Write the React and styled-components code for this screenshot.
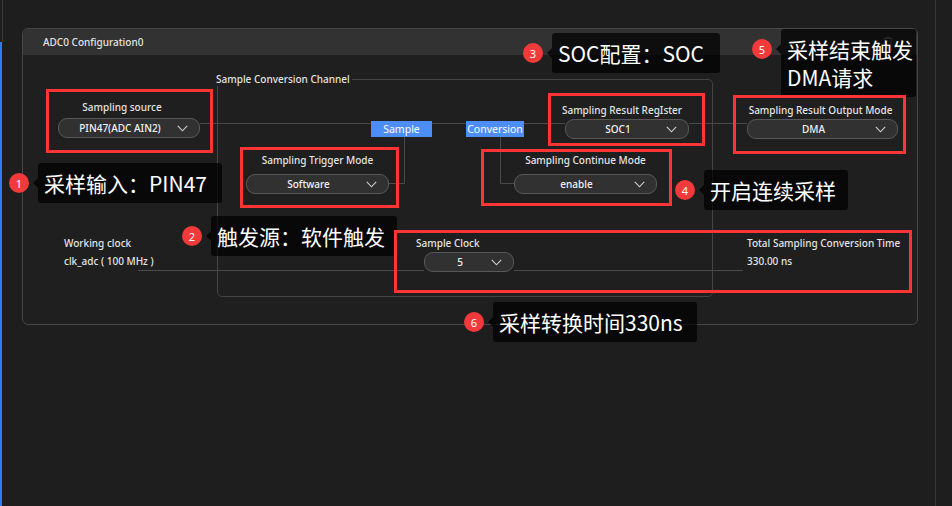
import React from "react";
import styled, { createGlobalStyle } from "styled-components";

const OX = 23;
const OY = 55;
const UI = `"Noto Sans", "Open Sans", "Liberation Sans", sans-serif`;
const CJK = `"Noto Sans CJK SC", "Noto Sans", sans-serif`;
const FS = "10px";

const GlobalStyle = createGlobalStyle`
  html, body { margin: 0; padding: 0; background: #1e1e1e; }
  body { font-family: ${UI}; color: #e8e8e8; }
  #root { width: 952px; height: 506px; }
`;

const Screen = styled.div`
  position: relative;
  width: 952px;
  height: 506px;
  display: flex;
  background: #1e1e1e;
  overflow: hidden;
`;
const LeftRail = styled.div`
  width: 3px;
  display: flex;
  flex-direction: column;
`;
const RailTop = styled.div`
  height: 42px;
  border-right: 1px solid #3a3a3a;
`;
const RailBlue = styled.div`
  flex: 1;
  width: 2px;
  background: #2f7bf0;
`;
const Main = styled.div`
  flex: 1;
  padding: 28px 0 0 19px;
`;
const Divider = styled.div`
  width: 1px;
  background: #393939;
`;
const Gutter = styled.div`
  width: 16px;
`;

const Panel = styled.section`
  width: 896px;
  height: 297px;
  box-sizing: border-box;
  border: 1px solid #474747;
  border-radius: 6px;
  background: #1f1f1f;
  display: flex;
  flex-direction: column;
`;
const PanelHeader = styled.header`
  height: 26px;
  flex: none;
  background: #323232;
  border-radius: 5px 5px 0 0;
  padding: 0 24px 0 20px;
  display: flex;
  align-items: center;
  justify-content: space-between;
`;
const PanelTitle = styled.span`
  font-size: ${FS};
  font-weight: 500;
  color: #e2e2e2;
`;
const PanelBody = styled.div`
  position: relative;
  flex: 1;
`;

const Group = styled.div`
  position: absolute;
  left: ${217 - OX}px;
  top: ${79 - OY}px;
  width: 496px;
  height: 218px;
  box-sizing: border-box;
  border: 1px solid #444;
  border-radius: 5px;
`;
const Legend = styled.span`
  position: absolute;
  left: -2px;
  top: -8px;
  padding-right: 2px;
  background: #1f1f1f;
  font-size: ${FS};
  font-weight: 500;
  line-height: 14px;
  color: #e2e2e2;
  white-space: nowrap;
`;

const Wires = styled.svg`
  position: absolute;
  left: 0;
  top: 0;
  width: 100%;
  height: 100%;
  overflow: visible;
  pointer-events: none;
`;

const Field = styled.div`
  position: absolute;
  left: ${(p) => p.$x - OX}px;
  top: ${(p) => p.$y - OY}px;
  width: ${(p) => p.$w}px;
  display: flex;
  flex-direction: column;
  align-items: ${(p) => (p.$start ? "flex-start" : "center")};
  gap: ${(p) => p.$gap}px;
`;
const FieldLabel = styled.span`
  font-size: ${FS};
  font-weight: 500;
  line-height: 14px;
  color: #e4e4e4;
  white-space: nowrap;
  transform: translateX(${(p) => p.$shift || 0}px);
`;
const Select = styled.div`
  position: relative;
  align-self: stretch;
  height: 20px;
  box-sizing: border-box;
  border: 1px solid #585858;
  border-radius: 9px;
  background: #313131;
  padding-right: 18px;
  display: flex;
  align-items: center;
  justify-content: center;
  font-size: ${FS};
  font-weight: 500;
  color: #f2f2f2;
  white-space: nowrap;
`;
const Chevron = styled.svg`
  position: absolute;
  right: 11px;
  top: 6px;
`;

const Tag = styled.div`
  position: absolute;
  left: ${(p) => p.$x - OX}px;
  top: ${121 - OY}px;
  width: ${(p) => p.$w}px;
  height: 16px;
  background: #4d8df6;
  color: #fff;
  font-size: 10.5px;
  display: flex;
  align-items: center;
  justify-content: center;
`;

const Info = styled.div`
  position: absolute;
  left: ${(p) => p.$x - OX}px;
  top: ${234 - OY}px;
  display: flex;
  flex-direction: column;
  font-size: ${FS};
  font-weight: 500;
  line-height: 18px;
  color: #e4e4e4;
  white-space: nowrap;
`;

/* annotation overlay */
const RedBox = styled.div`
  position: absolute;
  left: ${(p) => p.$x}px;
  top: ${(p) => p.$y}px;
  width: ${(p) => p.$w}px;
  height: ${(p) => p.$h}px;
  box-sizing: border-box;
  border: 3px solid #ff3434;
  z-index: 3;
`;
const Callout = styled.div`
  position: absolute;
  left: ${(p) => p.$x}px;
  top: ${(p) => p.$y}px;
  display: flex;
  align-items: flex-start;
  z-index: 2;
`;
const Badge = styled.span`
  width: 20px;
  height: 20px;
  margin-top: 10px;
  border-radius: 50%;
  background: #f23a3a;
  color: #fff;
  font-family: ${UI};
  font-size: 11px;
  display: flex;
  align-items: center;
  justify-content: center;
  flex: none;
`;
const Arrow = styled.span`
  margin: 15px 0 0 4px;
  width: 0;
  height: 0;
  border-top: 5px solid transparent;
  border-bottom: 5px solid transparent;
  border-right: 5px solid rgba(0, 0, 0, 0.72);
  flex: none;
`;
const Tip = styled.div`
  width: ${(p) => p.$w}px;
  box-sizing: border-box;
  padding: 6px 6px;
  background: rgba(0, 0, 0, 0.72);
  border-radius: 3px;
  font-family: ${CJK};
  font-size: 21px;
  line-height: 28px;
  color: #fff;
  white-space: nowrap;
`;

const TrashIcon = () => (
  <svg width="10" height="12" viewBox="0 0 10 12" fill="none" stroke="#8a8a8a" strokeWidth="1">
    <path d="M0.5 2.5h9M3.5 2.5V1h3v1.5M1.5 2.5l0.7 9h5.6l0.7-9" />
  </svg>
);

const Down = () => (
  <Chevron width="11" height="7" viewBox="0 0 11 7" fill="none">
    <path d="M0.8 0.8 L5.5 5.8 L10.2 0.8" stroke="#d2d2d2" strokeWidth="1.1" />
  </Chevron>
);

const fields = [
  { label: "Sampling source", value: "PIN47(ADC AIN2)", x: 58, y: 100, w: 142, gap: 4, shift: -7 },
  { label: "Sampling Trigger Mode", value: "Software", x: 246, y: 153, w: 143, gap: 7 },
  { label: "Sampling Result RegIster", value: "SOC1", x: 565, y: 103, w: 124, gap: 2, shift: -5 },
  { label: "Sampling Result Output Mode", value: "DMA", x: 747, y: 103, w: 151, gap: 2, shift: -2 },
  { label: "Sampling Continue Mode", value: "enable", x: 514, y: 153, w: 143, gap: 7 },
  { label: "Sample Clock", value: "5", x: 424, y: 236, w: 90, gap: 2, start: true, shift: -8 },
];

const wires = [
  "M200 123.5 H371",
  "M432 123.5 H466",
  "M524 123.5 H565",
  "M689 123.5 H747",
  "M404.5 137 V183.5 H389",
  "M500.5 137 V183.5 H514",
  "M138 270.5 H424",
  "M514 270.5 H743",
];

const boxes = [
  { x: 46, y: 89, w: 167, h: 64 },
  { x: 240, y: 147, w: 159, h: 61 },
  { x: 548, y: 93, w: 157, h: 53 },
  { x: 481, y: 149, w: 191, h: 57 },
  { x: 733, y: 95, w: 173, h: 59 },
  { x: 394, y: 230, w: 518, h: 63 },
];

const notes = [
  { n: 1, x: 9, y: 163, w: 184, lines: ["采样输入：PIN47"] },
  { n: 2, x: 182, y: 216, w: 186, lines: ["触发源：软件触发"] },
  { n: 3, x: 523, y: 33, w: 168, lines: ["SOC配置：SOC"] },
  { n: 4, x: 675, y: 170, w: 144, lines: ["开启连续采样"] },
  { n: 5, x: 752, y: 29, w: 135, lines: ["采样结束触发", "DMA请求"] },
  { n: 6, x: 464, y: 302, w: 204, lines: ["采样转换时间330ns"] },
];

export default function App() {
  return (
    <>
      <GlobalStyle />
      <Screen>
        <LeftRail>
          <RailTop />
          <RailBlue />
        </LeftRail>
        <Main>
          <Panel>
            <PanelHeader>
              <PanelTitle>ADC0 Configuration0</PanelTitle>
              <TrashIcon />
            </PanelHeader>
            <PanelBody>
              <Group>
                <Legend>Sample Conversion Channel</Legend>
              </Group>
              <Wires>
                <g transform={`translate(${-OX} ${-OY})`} stroke="#4a4a4a" strokeWidth="1" fill="none">
                  {wires.map((d) => (
                    <path key={d} d={d} />
                  ))}
                </g>
              </Wires>
              <Tag $x={371} $w={61}>Sample</Tag>
              <Tag $x={466} $w={58}>Conversion</Tag>
              {fields.map((f) => (
                <Field key={f.label} $x={f.x} $y={f.y} $w={f.w} $gap={f.gap} $start={f.start}>
                  <FieldLabel $shift={f.shift}>{f.label}</FieldLabel>
                  <Select>
                    {f.value}
                    <Down />
                  </Select>
                </Field>
              ))}
              <Info $x={64}>
                <span>Working clock</span>
                <span>clk_adc ( 100 MHz )</span>
              </Info>
              <Info $x={747}>
                <span>Total Sampling Conversion Time</span>
                <span>330.00 ns</span>
              </Info>
            </PanelBody>
          </Panel>
        </Main>
        <Divider />
        <Gutter />
        {notes.map((c) => (
          <Callout key={c.n} $x={c.x} $y={c.y}>
            <Badge>{c.n}</Badge>
            <Arrow />
            <Tip $w={c.w}>
              {c.lines.map((l) => (
                <div key={l}>{l}</div>
              ))}
            </Tip>
          </Callout>
        ))}
        {boxes.map((b) => (
          <RedBox key={`${b.x}-${b.y}`} $x={b.x} $y={b.y} $w={b.w} $h={b.h} />
        ))}
      </Screen>
    </>
  );
}
